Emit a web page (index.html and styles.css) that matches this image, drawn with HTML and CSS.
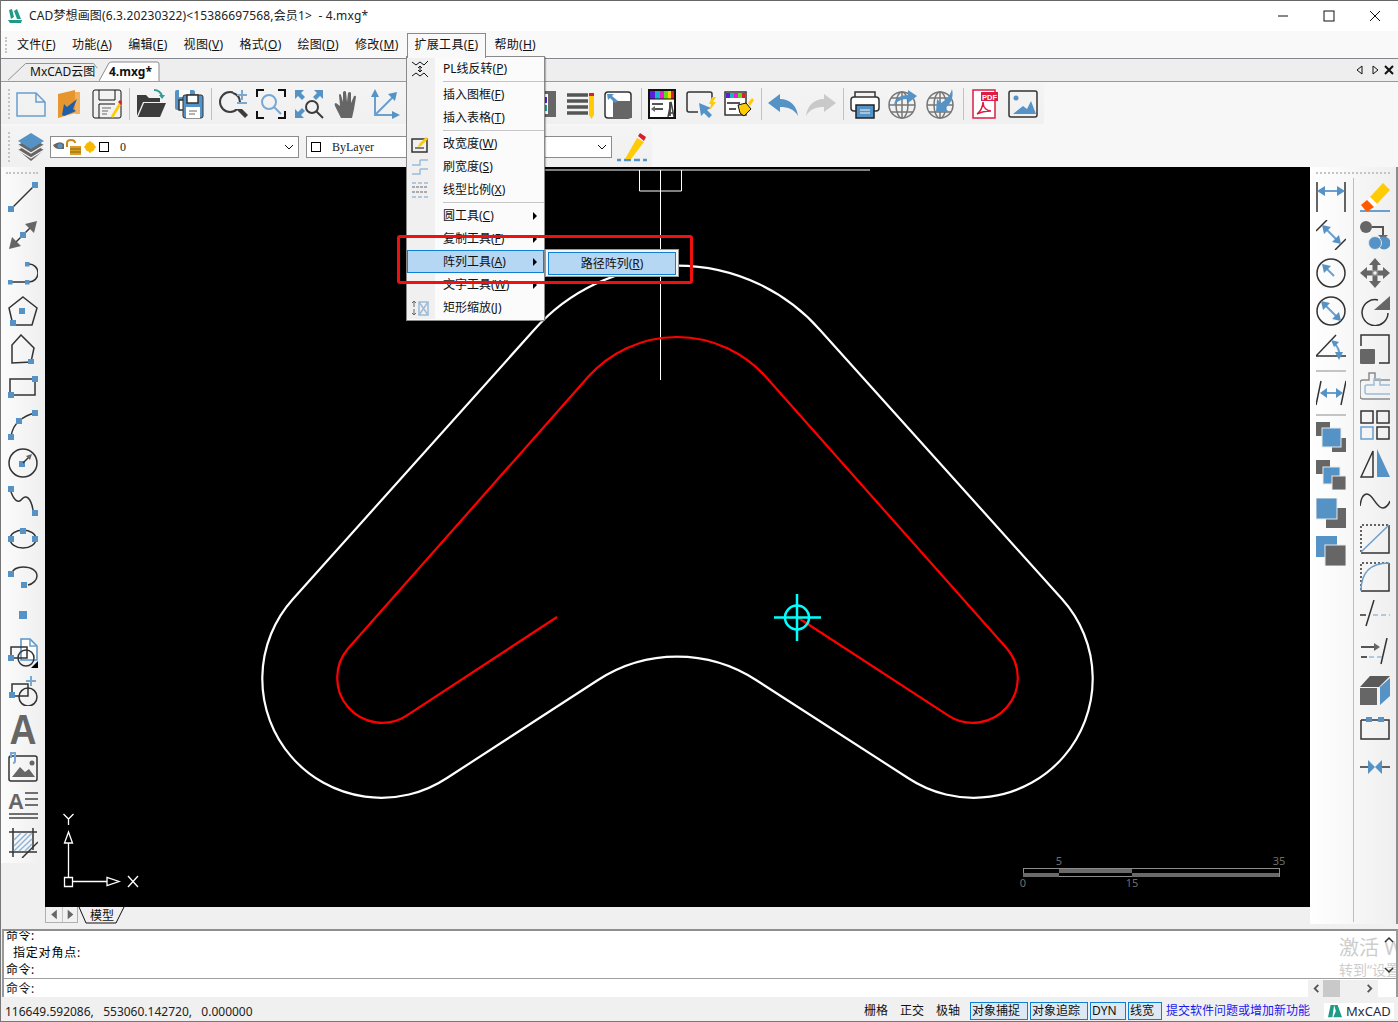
FILE: index.html
```html
<!DOCTYPE html>
<html lang="zh-CN">
<head>
<meta charset="utf-8">
<title>CAD梦想画图</title>
<link rel="stylesheet" href="styles.css">
</head>
<body>
<div class="app">

<header class="titlebar">
  <svg class="app-icon" viewBox="0 0 16 16"><path class="logo" d="M2 2 5 1 7 9 4 11ZM7 3 10 1 14 11 10 11ZM1 12 15 12 14 15 3 15Z"/></svg>
  <span class="title-text">CAD梦想画图(6.3.20230322)&lt;15386697568,会员1&gt;  - 4.mxg*</span>
  <div class="win-controls">
    <svg viewBox="0 0 12 12"><path class="k1" d="M1 6H11"/></svg>
    <svg viewBox="0 0 12 12"><rect class="k1" x="1" y="1" width="10" height="10"/></svg>
    <svg viewBox="0 0 12 12"><path class="k1" d="M1 1 11 11M11 1 1 11"/></svg>
  </div>
</header>

<nav class="menubar">
  <span class="grip-v"></span>
  <span class="menu-top">文件(<u>F</u>)</span>
  <span class="menu-top">功能(<u>A</u>)</span>
  <span class="menu-top">编辑(<u>E</u>)</span>
  <span class="menu-top">视图(<u>V</u>)</span>
  <span class="menu-top">格式(<u>O</u>)</span>
  <span class="menu-top">绘图(<u>D</u>)</span>
  <span class="menu-top">修改(<u>M</u>)</span>
  <span class="menu-top menu-open">扩展工具(<u>E</u>)</span>
  <span class="menu-top">帮助(<u>H</u>)</span>
</nav>

<div class="tabrow">
  <div class="tab tab-back">
    <svg class="tab-shape" viewBox="0 0 100 22"><path class="tab-line" d="M0 22 19 4H92L96 9"/></svg>
    <span class="tab-label">MxCAD云图</span>
  </div>
  <div class="tab tab-active">
    <svg class="tab-shape" viewBox="0 0 62 22"><path class="tab-fill" d="M0 22 10 4Q11 3 13 3H58Q60 3 60 5V22"/></svg>
    <span class="tab-label">4.mxg*</span>
  </div>
  <div class="tab-nav">
    <svg viewBox="0 0 10 10"><path class="k1" d="M7 1 2 5 7 9Z"/></svg>
    <svg viewBox="0 0 10 10"><path class="k1" d="M3 1 8 5 3 9Z"/></svg>
    <svg class="tab-close" viewBox="0 0 10 10"><path class="k2" d="M1 1 9 9M9 1 1 9"/></svg>
  </div>
</div>

<section class="toolbars">
  <div class="toolrow">
    <div class="toolbar toolbar-main">
      <span class="grip-v"></span>
      <svg class="ic" viewBox="0 0 30 30"><path class="bl" d="M1 4H20L29 13V27H1ZM20 4V13H29"/></svg>
      <svg class="ic" viewBox="0 0 30 30"><path class="or" d="M4 5 21 1V24L4 29Z"/><path class="or2" d="M21 3H26V25H21Z"/><path class="bd-f" d="M23 10 19 20 22 22 10 27 8 26 10 15 13 18Z"/></svg>
      <svg class="ic" viewBox="0 0 30 30"><rect class="k1" x="1" y="1" width="28" height="28" rx="2"/><path class="k1" d="M7 1V11H23V1M7 29V15H23"/><path class="gl" d="M10 19H19M10 22H16M10 25H15"/><path class="yf" d="M19 27 27 14 29 16 21 29Z"/><path class="rf" d="M26 13 28 11 30 13 29 16Z"/></svg>
      <span class="tsep"></span>
      <svg class="ic" viewBox="0 0 30 30"><path class="df" d="M1 6H10L13 9H24V13H7L1 27Z"/><path class="df" d="M8 14H30L24 28H2Z"/><path class="teal" d="M18 1Q24 1 26 7"/><path class="tf" d="M23 6H29L26 10Z"/></svg>
      <svg class="ic" viewBox="0 0 30 30"><rect class="bf" x="1" y="1" width="20" height="20" rx="2"/><rect class="wf" x="5" y="1" width="11" height="7"/><rect class="wk" x="5" y="11" width="12" height="10"/><rect class="bk" x="9" y="6" width="20" height="23" rx="2"/><rect class="wk" x="13" y="6" width="11" height="8"/><rect class="wf" x="12" y="18" width="14" height="11"/><path class="gl" d="M15 22H23M15 25H21"/></svg>
      <span class="tsep"></span>
      <svg class="ic" viewBox="0 0 30 30"><circle class="dk" cx="12" cy="13" r="10"/><path class="dkf" d="M19 21 22 18 30 26 27 29Z"/><path class="wt" d="M15 0H28V20H15Z"/><path class="dk" d="M15 4A10 10 0 0 1 22 13"/><path class="blt" d="M19 6H29M24 1V11M19 14H29"/></svg>
      <svg class="ic" viewBox="0 0 30 30"><path class="k2" d="M1 8V1H8M22 1H29V8M1 22V29H8M22 29H29V22"/><circle class="blt" cx="13" cy="13" r="7"/><path class="blt" d="M18 18 25 25"/></svg>
      <svg class="ic" viewBox="0 0 30 30"><path class="bf" d="M1 1H10L7 4 11 8 8 11 4 7 1 10ZM29 1H20L23 4 19 8 22 11 26 7 29 10ZM1 29H10L7 26 11 22 8 19 4 23 1 20Z"/><circle class="dk" cx="18" cy="18" r="6"/><path class="dk" d="M22 22 29 29"/></svg>
      <svg class="ic" viewBox="0 0 30 30"><path class="gf" d="M9 29 3 17Q2 14 4 14L8 17 7 6Q8 4 9 6L11 13 11 3Q13 1 14 3L15 13 16 4Q18 2 19 4L19 14 22 7Q24 6 24 8L22 20 20 29Z"/></svg>
      <svg class="ic" viewBox="0 0 30 30"><path class="bls" d="M5 4V26H28M5 26 25 6"/><path class="bf" d="M5 0 9 8H1ZM30 26 22 30V22ZM27 3 25 12 18 5Z"/></svg>
      <div class="hidden-span"></div>
      <svg class="ic" viewBox="0 0 30 30"><rect class="gf" x="2" y="2" width="26" height="26"/><rect class="wf" x="6" y="5" width="14" height="20"/><rect class="purple" x="7" y="8" width="12" height="6"/><rect class="tealf" x="7" y="16" width="12" height="6"/></svg>
      <svg class="ic" viewBox="0 0 30 30"><path class="gk3" d="M1 6H22M1 12H22M1 18H22M1 24H22"/><rect class="yf" x="23" y="5" width="5" height="21"/><rect class="rf" x="23" y="4" width="5" height="3"/><path class="yf" d="M23 26H28L25.500 30Z"/></svg>
      <svg class="ic" viewBox="0 0 30 30"><rect class="wk" x="1" y="3" width="26" height="26" rx="3"/><path class="gf" d="M9 12H28V29H9Z"/><path class="bf" d="M3 5H10L8 7 14 12 11 14 6 9 4 11Z"/></svg>
      <span class="tsep"></span>
      <svg class="ic" viewBox="0 0 30 30"><rect class="bkk" x="1" y="1" width="26" height="28"/><rect class="purple" x="2" y="2" width="5" height="8"/><rect class="cyan" x="7" y="2" width="5" height="8"/><rect class="mag" x="12" y="2" width="4" height="8"/><rect class="lime" x="16" y="2" width="4" height="8"/><rect class="yel" x="20" y="2" width="3" height="8"/><rect class="red" x="23" y="2" width="3" height="8"/><path class="gk2" d="M4 15H15M6 20H15M22 13V27"/><path class="gk15" d="M20 28 23 13 26 28M21 24H25"/><path class="gf" d="M3 20 7 17V23Z"/><path class="k1" d="M1 10H27"/></svg>
      <svg class="ic" viewBox="0 0 30 30"><path class="k15" d="M12 23H3Q1 23 1 21V5Q1 3 3 3H24Q26 3 26 5V11"/><path class="bf" d="M13 14 25 19 21 21 26 26 23 29 18 24 15 27Z"/><path class="yf" d="M26 8 30 8 27 13 30 13 24 21 25 15 23 15Z"/></svg>
      <svg class="ic" viewBox="0 0 30 30"><rect class="wk" x="1" y="3" width="21" height="23"/><rect class="purple" x="2" y="4" width="4" height="5"/><rect class="cyan" x="6" y="4" width="4" height="5"/><rect class="mag" x="10" y="4" width="4" height="5"/><rect class="lime" x="14" y="4" width="4" height="5"/><rect class="red" x="18" y="4" width="3" height="5"/><path class="gk2" d="M3 14H16M5 20H12"/><path class="yf" d="M14 16 22 14 27 20 20 27 16 24 Z"/><path class="k1" d="M14 16 22 14 27 20 20 27 16 24Z"/><path class="yf" d="M24 14 28 9 30 11 26 17Z"/></svg>
      <span class="tsep"></span>
      <svg class="ic" viewBox="0 0 30 30"><path class="bf" d="M0 14 12 5V10C22 10 29 17 30 27 26 20 20 18 12 18V23Z"/></svg>
      <svg class="ic" viewBox="0 0 30 30"><path class="lg" d="M30 14 18 5V10C8 10 1 17 0 27 4 20 10 18 18 18V23Z"/></svg>
      <span class="tsep"></span>
      <svg class="ic" viewBox="0 0 30 30"><path class="k15" d="M5 8V3H25V8"/><rect class="wk" x="1" y="8" width="28" height="14" rx="3"/><rect class="bkb" x="6" y="16" width="18" height="13"/><path class="wln" d="M10 21H20M10 24H20"/></svg>
      <svg class="ic" viewBox="0 0 30 30"><circle class="gk15n" cx="14" cy="16" r="13"/><ellipse class="gk15n" cx="14" cy="16" rx="6" ry="13"/><path class="gk15n" d="M1 16H27M3 9H25M3 23H25M14 3V29"/><path class="bf" d="M6 16C7 9 13 6 20 6V1L29 7 20 14V10C15 10 10 11 6 16Z"/></svg>
      <svg class="ic" viewBox="0 0 30 30"><circle class="gk15n" cx="14" cy="16" r="13"/><ellipse class="gk15n" cx="14" cy="16" rx="6" ry="13"/><path class="gk15n" d="M1 16H27M3 9H25M3 23H25M14 3V29"/><path class="bf" d="M26 0C28 8 25 15 19 19L23 23 10 23 11 10 15 14C20 11 24 7 26 0Z"/></svg>
      <span class="tsep"></span>
      <svg class="ic" viewBox="0 0 30 30"><rect class="pdf-page" x="3" y="1" width="22" height="28"/><rect class="pdf-tag" x="11" y="3" width="17" height="9"/><text class="pdf-text" x="19.500" y="10.500">PDF</text><path class="pdf-sym" d="M7 25C10 23 13 18 13 13 13 19 17 22 21 22 16 22 11 23 7 25Z"/></svg>
      <svg class="ic" viewBox="0 0 30 30"><rect class="k15" x="1" y="2" width="28" height="26" rx="2"/><circle class="bf" cx="8" cy="9" r="2.500"/><path class="bf" d="M5 25 15 17 19 20 23 12 28 25Z"/></svg>
    </div>
  </div>
  <div class="toolrow">
    <div class="toolbar toolbar-second">
      <span class="grip-v"></span>
      <svg class="ic" viewBox="0 0 30 30"><path class="gf" d="M2 18 15 11 28 18 15 29Z"/><path class="wln" d="M2 18 15 26 28 18"/><path class="gf" d="M2 13 15 6 28 13 15 24Z"/><path class="wln" d="M2 13 15 21 28 13"/><path class="bf" d="M2 9 15 1 28 9 15 17Z"/></svg>
      <div class="combo combo-layer">
        <svg class="lyr-ic" viewBox="0 0 46 16"><path class="gf" d="M0 6Q7 1 11 5V10H6Q2 10 0 6Z"/><circle class="bf" cx="7" cy="7" r="2.500"/><path class="lock-sh" d="M14 8V4Q14 1 18 1 22 1 22 4"/><rect class="gold" x="17" y="7" width="11" height="9"/><path class="gold-ln" d="M17 10H28M17 13H28"/><path class="sun-r" d="M37 2V14M31 8H43"/><circle class="sun" cx="37" cy="8" r="5"/></svg>
        <span class="swatch"></span>
        <span class="combo-text">0</span>
        <svg class="chev" viewBox="0 0 10 6"><path class="k1" d="M1 1 5 5 9 1"/></svg>
      </div>
      <div class="combo combo-line">
        <span class="swatch"></span>
        <span class="combo-text">ByLayer</span>
        <svg class="chev" viewBox="0 0 10 6"><path class="k1" d="M1 1 5 5 9 1"/></svg>
      </div>
      <svg class="ic" viewBox="0 0 30 30"><path class="bd" d="M0 28H4M7 28H14M17 28H23M26 28H30"/><path class="yf" d="M8 27 20 6 27 10 14 27Z"/><path class="rf" d="M21 4 23 1 29 5 27 9Z"/></svg>
    </div>
  </div>
</section>

<main class="workspace">
  <aside class="side-left">
    <span class="grip-h"></span>
    <div class="tool-col">
      <svg class="ic" viewBox="0 0 30 30"><path class="k15" d="M3 27 27 3"/><rect class="bf" x="24" y="0" width="6" height="6"/><rect class="bf" x="0" y="24" width="6" height="6"/></svg>
      <svg class="ic" viewBox="0 0 30 30"><path class="k15" d="M7 23 23 7"/><path class="gf" d="M1 29 4 17 13 26ZM29 1 26 13 17 4Z"/><rect class="bf" x="12" y="12" width="6" height="6"/></svg>
      <svg class="ic" viewBox="0 0 30 30"><path class="k15" d="M2 24H19M21 6A9 9 0 0 1 21 24"/><rect class="bf" x="0" y="22" width="4.500" height="4.500"/><rect class="bf" x="17" y="22" width="4.500" height="4.500"/><rect class="bf" x="17" y="4" width="4.500" height="4.500"/></svg>
      <svg class="ic" viewBox="0 0 30 30"><path class="k15" d="M15 1 29 12 24 29H5L1 12Z"/><rect class="bf" x="11" y="12" width="6" height="6"/><rect class="bf" x="2" y="24" width="6" height="6"/></svg>
      <svg class="ic" viewBox="0 0 30 30"><path class="k15" d="M13 1 26 14 23 28 4 29V11Z"/><rect class="bf" x="20" y="25" width="6" height="6"/></svg>
      <svg class="ic" viewBox="0 0 30 30"><rect class="k15" x="2" y="7" width="25" height="16"/><rect class="bf" x="24" y="4" width="6" height="6"/><rect class="bf" x="0" y="20" width="6" height="6"/></svg>
      <svg class="ic" viewBox="0 0 30 30"><path class="k15" d="M3 26Q5 16 11 11 18 5 27 3"/><rect class="bf" x="0" y="24" width="6" height="6"/><rect class="bf" x="8" y="8" width="6" height="6"/><rect class="bf" x="24" y="0" width="6" height="6"/></svg>
      <svg class="ic" viewBox="0 0 30 30"><circle class="k15" cx="15" cy="15" r="14"/><rect class="bf" x="11" y="13" width="6" height="6"/><path class="k15" d="M15 15 22 8"/><path class="gf" d="M24 6 22 12 18 8Z"/></svg>
      <svg class="ic" viewBox="0 0 30 30"><path class="k15" d="M3 6C6 14 10 18 14 13 18 8 23 12 25 24"/><rect class="bf" x="0" y="0" width="6" height="6"/><rect class="bf" x="24" y="24" width="6" height="6"/></svg>
      <svg class="ic" viewBox="0 0 30 30"><ellipse class="k15" cx="15" cy="15" rx="13" ry="9"/><rect class="bf" x="12" y="4" width="6" height="6"/><rect class="bf" x="0" y="12" width="6" height="6"/><rect class="bf" x="24" y="12" width="6" height="6"/></svg>
      <svg class="ic" viewBox="0 0 30 30"><path class="k15" d="M3 12C5 7 10 5 15 5 24 5 29 9 29 14 29 18 25 22 20 23"/><rect class="bf" x="0" y="9" width="6" height="6"/><rect class="bf" x="13" y="20" width="6" height="6"/></svg>
      <svg class="ic" viewBox="0 0 30 30"><rect class="bf" x="11" y="11" width="8" height="8"/></svg>
      <svg class="ic" viewBox="0 0 30 30"><path class="bkw" d="M13 1H22L29 8V22H13Z"/><path class="bl" d="M22 1V8H29"/><rect class="k15" x="3" y="9" width="16" height="11"/><circle class="k15" cx="18" cy="20" r="8"/><rect class="bf" x="0" y="17" width="6" height="6"/><path class="blk" d="M30 23V30H23Z"/></svg>
      <svg class="ic" viewBox="0 0 30 30"><rect class="k15" x="4" y="8" width="16" height="12"/><circle class="k15" cx="20" cy="21" r="9"/><rect class="bf" x="1" y="16" width="6" height="6"/><path class="blt" d="M18 5H28M23 0V10"/></svg>
      <svg class="ic ic-text" viewBox="0 0 30 30"><text class="big-a" x="15" y="30" textLength="27" lengthAdjust="spacingAndGlyphs">A</text></svg>
      <svg class="ic" viewBox="0 0 30 30"><rect class="k15" x="1" y="4" width="28" height="25" rx="2"/><circle class="gf" cx="24" cy="11" r="2.500"/><path class="gf" d="M4 25 12 15 17 20 21 17 27 25Z"/><path class="blt" d="M3 6V1H7V9Q7 11 5 11"/></svg>
      <svg class="ic ic-text" viewBox="0 0 30 30"><text class="mid-a" x="8" y="19">A</text><path class="gk15" d="M17 3H30M17 9H30M17 15H30M1 24H30M1 28H30"/></svg>
      <svg class="ic" viewBox="0 0 30 30"><path class="k15" d="M1 4H29M1 24H29M5 0V29M25 0V22"/><path class="hatch" d="M6 12 13 5M6 18 19 5M6 23 24 5M11 23 24 11M17 23 24 16"/><path class="k15" d="M14 30 30 14"/></svg>
    </div>
  </aside>

  <div class="center">
    <div class="canvas">
      <svg class="drawing" viewBox="45 167 1265 740">
        <path class="wline" d="M540 170H870M639.500 170V191H681.500V170M660.500 170V380"/>
        <path class="outer" d="M293 599 534 330A191 191 0 0 1 820 330L1062 599A119 119 0 0 1 908 778L756 680A145 145 0 0 0 598 680L447 778A119 119 0 0 1 293 599Z"/>
        <path class="inner" d="M557 617 406.600 715.700A45 45 0 0 1 348.300 648.300L588 377A119 119 0 0 1 766 377L1006.700 648.300A45 45 0 0 1 948.400 715.700L797 617"/>
        <g class="cursor"><circle cx="797" cy="617.500" r="12"/><path d="M774 617.500H821M797 594V641"/></g>
        <g class="ucs">
          <path d="M68.500 878V843M73 881.500H107M64.500 877.500H72.500V886.500H64.500ZM68.500 832 64.500 843H72.500ZM107 877.500V885.500L119 881.500ZM63.500 814 68.500 819 73.500 814M68.500 819V825M128 876 138 887M138 876 128 887"/>
        </g>
        <g class="scalebar">
          <rect class="sb-o" x="1023.500" y="868.500" width="256" height="8"/>
          <path class="sb-f" d="M1023 873H1059V877H1023ZM1059 869H1132V873H1059ZM1132 873H1279V877H1132Z"/>
          <text x="1059" y="865">5</text><text x="1279" y="865">35</text><text x="1023" y="887">0</text><text x="1132" y="887">15</text>
        </g>
      </svg>
    </div>
    <div class="sheetbar">
      <div class="sheet-nav">
        <svg viewBox="0 0 16 16"><path class="gf" d="M11 3 5 8 11 13Z"/></svg>
        <svg viewBox="0 0 16 16"><path class="gf" d="M5 3 11 8 5 13Z"/></svg>
      </div>
      <div class="sheet-tab">
        <svg class="sheet-shape" viewBox="0 0 48 17"><path class="k1 wf-soft" d="M1 0 8 16H38L46 0"/></svg>
        <span class="sheet-label">模型</span>
      </div>
    </div>
  </div>

  <aside class="side-right">
    <span class="grip-h"></span>
    <div class="right-cols">
      <div class="tool-col">
        <svg class="ic" viewBox="0 0 30 30"><path class="k15" d="M1 0V30M29 0V30"/><path class="bls" d="M5 9H25"/><path class="bf" d="M1 9 9 4V14ZM29 9 21 4V14Z"/></svg>
        <svg class="ic" viewBox="0 0 30 30"><path class="k15" d="M0 11 11 0M19 30 30 19"/><path class="bls" d="M9 8 22 21"/><path class="bf" d="M6 5 15 7 8 14ZM25 24 16 22 23 15Z"/></svg>
        <svg class="ic" viewBox="0 0 30 30"><circle class="k15" cx="15" cy="15" r="14"/><path class="bls" d="M10 10 18 18"/><path class="bf" d="M6 6 15 8 8 15Z"/></svg>
        <svg class="ic" viewBox="0 0 30 30"><circle class="k15" cx="15" cy="15" r="14"/><path class="bls" d="M10 10 20 20"/><path class="bf" d="M5 5 14 7 7 14ZM25 25 16 23 23 16Z"/></svg>
        <svg class="ic" viewBox="0 0 30 30"><path class="k15" d="M0 22H30M0 22 20 1"/><path class="bls" d="M18 9Q24 15 23 21"/><path class="bf" d="M15 6 23 8 18 13ZM23 26 19 18 27 18Z"/></svg>
        <span class="csep"></span>
        <svg class="ic" viewBox="0 0 30 30"><path class="k15" d="M0 27 5 3M25 27 30 3"/><path class="bls" d="M7 15H24"/><path class="bf" d="M4 15 11 10V20ZM27 15 20 10V20Z"/></svg>
        <span class="csep"></span>
        <svg class="ic" viewBox="0 0 30 30"><rect class="gf" x="0" y="0" width="14" height="14"/><rect class="gf" x="16" y="16" width="14" height="14"/><rect class="bf bw" x="6" y="6" width="19" height="19"/></svg>
        <svg class="ic" viewBox="0 0 30 30"><rect class="gf" x="0" y="0" width="14" height="14"/><rect class="bf bw" x="7" y="7" width="17" height="17"/><rect class="gf bw" x="16" y="16" width="14" height="14"/></svg>
        <svg class="ic" viewBox="0 0 30 30"><rect class="gf" x="10" y="10" width="20" height="20"/><rect class="bf bw" x="0" y="0" width="21" height="21"/></svg>
        <svg class="ic" viewBox="0 0 30 30"><rect class="bf" x="0" y="0" width="21" height="21"/><rect class="gf bw" x="9" y="9" width="21" height="21"/></svg>
      </div>
      <div class="tool-col col-right">
        <svg class="ic" viewBox="0 0 30 30"><path class="bls" d="M0 29H30"/><path class="yf" d="M10 15 23 1 30 8 17 22Z"/><path class="wf" d="M7 18 10 15 17 22 14 25Z"/><path class="orr" d="M1 23 7 18 14 25 8 29 6 29Z"/></svg>
        <svg class="ic" viewBox="0 0 30 30"><circle class="gf" cx="6" cy="7" r="6"/><path class="gk2" d="M12 7H23V16"/><path class="gf" d="M18 15H28L23 20Z"/><circle class="bf" cx="24" cy="23" r="6.500"/><circle class="bf bw" cx="15" cy="23" r="6.500"/></svg>
        <svg class="ic" viewBox="0 0 30 30"><path class="gf" d="M15 0 21 7H17.500V12.500H12.500V7H9ZM15 30 21 23H17.500V17.500H12.500V23H9ZM0 15 7 9V12.500H12.500V17.500H7V21ZM30 15 23 9V12.500H17.500V17.500H23V21Z"/><circle class="gk1" cx="15" cy="15" r="2.500"/></svg>
        <svg class="ic" viewBox="0 0 30 30"><path class="k15" d="M18 4A13 13 0 1 0 28 17"/><path class="gf" d="M30 0V14H14Z"/></svg>
        <svg class="ic" viewBox="0 0 30 30"><path class="k15" d="M1 12V1H29V29H19"/><rect class="gf" x="0" y="15" width="15" height="15" rx="1"/></svg>
        <svg class="ic" viewBox="0 0 30 30"><path class="gk1" d="M30 8H15V1H9V8H3Q0 8 0 11V24Q0 27 3 27H30"/><path class="blt1" d="M30 13H20V7H14V13H7Q5 13 5 15V20Q5 22 7 22H30"/></svg>
        <svg class="ic" viewBox="0 0 30 30"><rect class="k15" x="1" y="1" width="12" height="12"/><rect class="k15" x="17" y="1" width="12" height="12"/><rect class="bl" x="1" y="17" width="12" height="12"/><rect class="k15" x="17" y="17" width="12" height="12"/></svg>
        <svg class="ic" viewBox="0 0 30 30"><path class="k15" d="M1 29 13 3V29Z"/><path class="bf" d="M17 1 30 29H17Z"/></svg>
        <svg class="ic" viewBox="0 0 30 30"><path class="k15" d="M0 20C1 12 3 8 7 8 13 8 16 22 23 22 26 22 29 18 30 15"/></svg>
        <svg class="ic" viewBox="0 0 30 30"><path class="dot" d="M1 28V1H29"/><path class="k15" d="M29 1V29H1"/><path class="bls1" d="M1 28 29 1"/></svg>
        <svg class="ic" viewBox="0 0 30 30"><path class="dot" d="M1 28V1H29"/><path class="k15" d="M29 1V29H1"/><path class="bls1" d="M1 29Q1 1 29 1"/></svg>
        <svg class="ic" viewBox="0 0 30 30"><path class="k15" d="M0 15H6M14 0 6 26"/><path class="blt1 dash" d="M13 15H30"/></svg>
        <svg class="ic" viewBox="0 0 30 30"><path class="k15" d="M27 0 21 26"/><path class="gk2" d="M1 9H16"/><path class="gf" d="M14 5 20 9 14 13Z"/><path class="gk2" d="M1 19H7"/><path class="blt1 dash" d="M9 19H23"/></svg>
        <svg class="ic" viewBox="0 0 30 30"><path class="dgr" d="M10 0H30L19 11H0Z"/><rect class="gf" x="0" y="12" width="17" height="17"/><path class="bf" d="M20 11 30 2V20L20 29Z"/></svg>
        <svg class="ic" viewBox="0 0 30 30"><path class="k15" d="M1 6V25H29V6H23M7 6H1M18 6H12"/><rect class="bf" x="6" y="3" width="6" height="5"/><rect class="bf" x="18" y="3" width="6" height="5"/></svg>
        <svg class="ic" viewBox="0 0 30 30"><path class="k15" d="M0 15H8M22 15H30"/><path class="bf" d="M8 8 15 15 8 22ZM22 8 15 15 22 22Z"/></svg>
      </div>
    </div>
  </aside>
</main>

<section class="command">
  <div class="cmd-output">
    <div class="cmd-line">命令:</div>
    <div class="cmd-line cmd-indent">指定对角点:</div>
    <div class="cmd-line">命令:</div>
  </div>
  <div class="cmd-input">
    <span class="cmd-prompt">命令:</span>
    <div class="hscroll">
      <svg viewBox="0 0 10 10"><path class="gk2" d="M7 1 3 5 7 9"/></svg>
      <span class="thumb"></span>
      <svg viewBox="0 0 10 10"><path class="gk2" d="M3 1 7 5 3 9"/></svg>
    </div>
  </div>
  <div class="watermark">
    <div class="wm-big">激活 W</div>
    <div class="wm-small">转到“设置</div>
  </div>
  <svg class="vs-up" viewBox="0 0 10 8"><path class="k15" d="M1 6 5 2 9 6"/></svg>
  <svg class="vs-down" viewBox="0 0 10 8"><path class="k15" d="M1 2 5 6 9 2"/></svg>
</section>

<footer class="statusbar">
  <span class="coords">116649.592086,&nbsp;&nbsp;&nbsp;553060.142720,&nbsp;&nbsp;&nbsp;0.000000</span>
  <div class="panes">
    <span class="pane p-grid">栅格</span>
    <span class="pane p-ortho">正交</span>
    <span class="pane p-polar">极轴</span>
    <span class="pane on p-snap">对象捕捉</span>
    <span class="pane on p-track">对象追踪</span>
    <span class="pane on p-dyn">DYN</span>
    <span class="pane on p-lw">线宽</span>
    <span class="pane link">提交软件问题或增加新功能</span>
    <span class="brand"><svg viewBox="0 0 18 16"><path class="logo" d="M1 15 4 1H8L6 15ZM8 1H12L17 15H12ZM7 15 10 8 12 15Z"/></svg>MxCAD</span>
  </div>
</footer>

<div class="dropdown">
  <div class="mi"><span class="mi-ico"><svg viewBox="0 0 18 18"><path class="k1" d="M1 2 5 5 9 2 13 5 17 1M1 16 5 13 9 16 13 13 17 17M9 6V12M7 8 9 6 11 8M7 10 9 12 11 10"/></svg></span><span class="mi-label">PL线反转(<u>P</u>)</span></div>
  <div class="ms"></div>
  <div class="mi"><span class="mi-ico"></span><span class="mi-label">插入图框(<u>F</u>)</span></div>
  <div class="mi"><span class="mi-ico"></span><span class="mi-label">插入表格(<u>T</u>)</span></div>
  <div class="ms"></div>
  <div class="mi"><span class="mi-ico"><svg viewBox="0 0 18 18"><rect class="k15" x="1" y="4" width="15" height="13"/><path class="k1" d="M4 13H13"/><path class="yf" d="M8 9 15 2 17 4 10 11 7 12Z"/></svg></span><span class="mi-label">改宽度(<u>W</u>)</span></div>
  <div class="mi"><span class="mi-ico"><svg viewBox="0 0 18 18"><path class="blt1" d="M9 2H17M9 2V7H1M9 11H17M9 11V16H1"/></svg></span><span class="mi-label">刷宽度(<u>S</u>)</span></div>
  <div class="mi"><span class="mi-ico"><svg viewBox="0 0 18 18"><path class="blt1 dash3" d="M1 2H17M1 16H17"/><path class="gl dash2" d="M1 6H17M1 11H17"/></svg></span><span class="mi-label">线型比例(<u>X</u>)</span></div>
  <div class="ms"></div>
  <div class="mi mi-sub"><span class="mi-ico"></span><span class="mi-label">圆工具(<u>C</u>)</span></div>
  <div class="mi mi-sub"><span class="mi-ico"></span><span class="mi-label">复制工具(<u>F</u>)</span></div>
  <div class="mi mi-sub mi-hot"><span class="mi-ico"></span><span class="mi-label">阵列工具(<u>A</u>)</span></div>
  <div class="mi mi-sub"><span class="mi-ico"></span><span class="mi-label">文字工具(<u>W</u>)</span></div>
  <div class="mi"><span class="mi-ico"><svg viewBox="0 0 18 18"><rect class="blt1" x="8" y="3" width="9" height="13"/><path class="blt1" d="M8 3 17 16M17 3 8 16"/><path class="gl" d="M3 2V8M1 4 3 2 5 4M3 10V16M1 14 3 16 5 14"/></svg></span><span class="mi-label">矩形缩放(<u>J</u>)</span></div>
</div>

<div class="submenu">
  <div class="sub-item">路径阵列(<u>R</u>)</div>
</div>

<div class="callout"></div>

</div>
</body>
</html>
```
FILE: styles.css
```css
* { box-sizing: border-box; }
html, body { margin: 0; padding: 0; }
body { background: #f0f0f0; }
.app {
  position: relative;
  width: 1398px;
  height: 1022px;
  overflow: hidden;
  display: flex;
  flex-direction: column;
  background: #f0f0f0;
  color: #111;
  font: 12px/16px "Noto Sans", "Noto Sans CJK SC", sans-serif;
  border-bottom: 1px solid #777;
}
.app::after {
  content: "";
  position: absolute;
  left: 0;
  top: 0;
  bottom: 0;
  width: 1px;
  background: #777;
  z-index: 5;
}
svg { display: block; flex: none; }
u { text-underline-offset: 1px; }

/* title bar */
.titlebar {
  height: 31px;
  flex: none;
  display: flex;
  align-items: center;
  background: #fff;
  border-top: 1px solid #666;
  padding-left: 7px;
}
.app-icon { width: 16px; height: 16px; }
.title-text { margin-left: 6px; white-space: pre; color: #222; letter-spacing: 0.140px; }
.win-controls { margin-left: auto; display: flex; align-items: center; margin-right: 17px; }
.win-controls svg { width: 12px; height: 12px; margin-left: 34px; }

/* menu bar */
.menubar {
  height: 27px;
  flex: none;
  display: flex;
  align-items: center;
  background: #f9f9f9;
  padding-left: 5px;
}
.menubar .grip-v { height: 16px; margin-right: 2px; }
.menu-top { padding: 0 8px; white-space: nowrap; letter-spacing: 0.290px; }
.menu-open {
  align-self: flex-end;
  height: 25px;
  line-height: 22px;
  background: #f9f9f9;
  border: 1px solid #8a8a8a;
  border-bottom: 0;
  padding: 0 7px;
  position: relative;
  z-index: 3;
}
.grip-v { width: 2px; height: 30px; flex: none; border-left: 2px dotted #c4c4c4; }
.grip-h { display: block; height: 2px; margin: 0 6px; border-top: 2px dotted #c4c4c4; flex: none; }

/* document tabs */
.tabrow {
  height: 24px;
  flex: none;
  display: flex;
  background: #eeeeee;
  border-top: 1px solid #86868e;
  border-bottom: 1px solid #9a9a9a;
  padding-left: 8px;
  position: relative;
}
.tab { position: relative; height: 22px; display: flex; align-items: center; padding-top: 3px; }
.tab-back { width: 93px; padding-left: 22px; }
.tab-active { width: 62px; margin-left: -2px; padding-left: 10px; }
.tab-shape { position: absolute; left: 0; top: 0; height: 22px; width: 100%; }
.tab-line { fill: none; stroke: #8a8a8a; }
.tab-fill { fill: #fff; stroke: #8a8a8a; }
.tab-label { position: relative; white-space: nowrap; }
.tab-active .tab-label { font-weight: 700; }
.tab-nav { margin-left: auto; display: flex; align-items: center; margin-right: 4px; }
.tab-nav svg { width: 10px; height: 10px; margin-left: 5px; }
.tab-nav .tab-close { margin-left: 4px; }

/* toolbars */
.toolbars {
  height: 85px;
  flex: none;
  display: flex;
  flex-direction: column;
  gap: 2px;
  padding-top: 1px;
  background: #f7f7f7;
}
.toolrow { height: 41px; display: flex; }
.toolbar {
  display: flex;
  align-items: center;
  background: linear-gradient(#f4f4f4, #f0f0f0);
  border-radius: 0 3px 3px 0;
  height: 100%;
}
.toolbar-main { width: 1044px; padding-left: 8px; }
.toolbar-second { width: 652px; padding-left: 8px; }
.toolbar .grip-v { margin-right: 2px; }
.ic { width: 30px; height: 30px; }
.ic-text { overflow: visible; }
.toolbar > .ic { margin: 0 4px; }
.tsep { width: 1px; height: 32px; background: #c2c2c2; margin: 0 2px 0 3px; flex: none; }
.hidden-span { width: 120px; flex: none; }

/* combos */
.combo {
  display: flex;
  align-items: center;
  height: 22px;
  background: #fff;
  border: 1px solid #8c8c8c;
  flex: none;
}
.combo-layer { width: 249px; padding-left: 2px; }
.combo-line { width: 306px; margin-left: 7px; padding-left: 4px; margin-right: 1px; }
.lyr-ic { width: 46px; height: 16px; }
.swatch { width: 10px; height: 10px; border: 1px solid #000; background: #fff; flex: none; }
.combo-text { font: 12px/14px "Liberation Serif", serif; margin-left: 11px; color: #222; }
.chev { width: 10px; height: 6px; margin-left: auto; margin-right: 4px; }

/* workspace */
.workspace { height: 757px; flex: none; display: flex; }
.side-left {
  width: 44px;
  flex: none;
  padding-top: 5px;
  background: linear-gradient(90deg, #fcfcfc, #efefef);
  display: flex;
  flex-direction: column;
  height: 696px;
}
.tool-col { display: flex; flex-direction: column; align-items: center; padding-top: 4px; }
.tool-col > .ic { margin: 4px 0; }
.side-left .tool-col { padding-left: 2px; }
.csep { width: 30px; height: 2px; background: #c4c4c4; margin: 2px 0; flex: none; }
.center { width: 1266px; flex: none; display: flex; flex-direction: column; }
.canvas { height: 740px; background: #000; margin-left: 1px; }
.drawing { width: 1265px; height: 740px; }
.wline { fill: none; stroke: #fff; stroke-width: 1; }
.outer { fill: none; stroke: #fff; stroke-width: 2.200; }
.inner { fill: none; stroke: #f00; stroke-width: 2.200; }
.cursor circle, .cursor path { fill: none; stroke: #0ff; stroke-width: 2.500; }
.ucs path { fill: none; stroke: #fff; stroke-width: 1.300; }
.sb-o { fill: none; stroke: #8c8c8c; }
.sb-f { fill: #6a6a6a; }
.scalebar text { fill: #6e6e6e; font: 11px "Noto Sans", sans-serif; text-anchor: middle; }

/* sheet tabs */
.sheetbar { height: 17px; display: flex; background: #f0f0f0; padding-left: 1px; }
.sheet-nav {
  width: 33px;
  height: 16px;
  display: flex;
  background: #f1f1f1;
  border: 1px solid #b0b0b0;
  border-top: 0;
  flex: none;
}
.sheet-nav svg { width: 16px; height: 15px; }
.sheet-nav svg + svg { border-left: 1px solid #c4c4c4; }
.sheet-tab { position: relative; width: 48px; height: 17px; display: flex; justify-content: center; }
.sheet-shape { position: absolute; left: 0; top: 0; width: 48px; height: 17px; }
.wf-soft { fill: #f6f6f6; }
.sheet-label { position: relative; line-height: 17px; }

.side-right {
  width: 88px;
  flex: none;
  padding-top: 5px;
  background: linear-gradient(90deg, #fff, #efefef);
  border-right: 2px solid #8d8d8d;
  display: flex;
  flex-direction: column;
}
.right-cols { display: flex; flex: 1; padding-left: 2px; gap: 3px; }
.right-cols .tool-col { width: 38px; }
.right-cols .col-right { width: 43px; border-left: 1px solid #bdbdbd; margin-top: 4px; padding-top: 0; margin-bottom: 2px; }

/* command window */
.command {
  margin-top: 5px;
  margin-left: 2px;
  height: 68px;
  flex: none;
  position: relative;
  background: #fff;
  border-top: 2px solid #8f8f8f;
  border-left: 2px solid #9a9a9a;
  border-right: 2px solid #9a9a9a;
  display: flex;
  flex-direction: column;
  overflow: hidden;
}
.cmd-output { height: 47px; overflow: hidden; padding-left: 2px; }
.cmd-line { height: 17px; line-height: 17px; color: #000; white-space: nowrap; letter-spacing: 0.500px; }
.cmd-line:first-child { margin-top: -4px; }
.cmd-indent { padding-left: 7px; letter-spacing: 0.800px; }
.cmd-input { height: 19px; border-top: 1px solid #a0a0a0; display: flex; align-items: center; padding-left: 2px; }
.cmd-prompt { line-height: 17px; letter-spacing: 0.500px; }
.hscroll { margin-left: auto; margin-right: 18px; width: 70px; height: 17px; background: #f0f0f0; display: flex; align-items: center; justify-content: space-between; padding: 0 4px; }
.hscroll svg { width: 9px; height: 9px; }
.thumb { width: 17px; height: 17px; background: #c9c9c9; margin-left: 2px; margin-right: 25px; }
.watermark { position: absolute; left: 1335px; top: 3px; color: #cdcdcd; white-space: nowrap; }
.wm-big { font-size: 20px; line-height: 28px; }
.wm-small { font-size: 14px; line-height: 20px; margin-top: -2px; }
.vs-up, .vs-down { position: absolute; left: 1380px; width: 10px; height: 8px; }
.vs-up { top: 5px; }
.vs-down { top: 35px; }

/* status bar */
.statusbar { flex: 1; display: flex; align-items: center; padding-left: 5px; background: #f0f0f0; min-height: 0; padding-top: 4px; }
.coords { color: #222; white-space: pre; margin-top: 2px; }
.panes { margin-left: auto; display: flex; align-items: center; height: 18px; margin-right: 4px; }
.pane { height: 18px; line-height: 16px; text-align: center; white-space: nowrap; flex: none; border: 1px solid transparent; }
.p-grid { width: 36px; }
.p-ortho { width: 36px; }
.p-polar { width: 36px; margin-right: 4px; }
.p-snap, .p-track { width: 58px; margin-right: 2px; }
.p-dyn { width: 36px; margin-right: 2px; }
.p-lw { width: 34px; }
.on { background: #dce9f4; border-color: #0f7fd6; text-align: left; padding-left: 1px; }
.link { color: #1a1aee; padding-left: 3px; width: 158px; text-align: left; }
.brand { display: flex; align-items: center; gap: 3px; background: #fff; height: 16px; width: 70px; margin-left: 4px; padding-left: 3px; color: #1f2d3d; font-size: 13px; }
.brand svg { width: 16px; height: 14px; }

/* dropdown */
.dropdown {
  position: absolute;
  left: 406px;
  top: 56px;
  width: 139px;
  height: 265px;
  background: #fbfbfb;
  border: 1px solid #8a8a8a;
  box-shadow: 1px 1px 1px rgba(0,0,0,.25);
  z-index: 2;
}
.mi { height: 23px; display: flex; align-items: center; position: relative; }
.mi-ico { width: 28px; height: 100%; background: #f0f0f0; flex: none; display: flex; align-items: center; justify-content: center; padding-right: 3px; }
.mi-ico svg { width: 18px; height: 18px; }
.mi-label { margin-left: 8px; white-space: nowrap; }
.ms { height: 3px; position: relative; background: linear-gradient(90deg, #f0f0f0 28px, transparent 28px); }
.ms::after { content: ""; position: absolute; left: 36px; right: 0; top: 1px; height: 1px; background: #c6c6c6; }
.mi-sub::after {
  content: "";
  position: absolute;
  right: 7px;
  top: 8px;
  border-left: 4px solid #000;
  border-top: 4px solid transparent;
  border-bottom: 4px solid transparent;
}
.mi-hot { background: #b5d7f3; outline: 1px solid #0f7fd6; outline-offset: -1px; }
.mi-hot .mi-ico { background: transparent; }

.submenu {
  position: absolute;
  left: 545px;
  top: 249px;
  width: 134px;
  height: 28px;
  padding: 2px 2px 1px;
  background: #f4f4f4;
  border: 1px solid #9a9a9a;
  z-index: 2;
}
.sub-item { height: 100%; background: #b5d7f3; border: 1px solid #0f7fd6; text-align: center; line-height: 22px; }

.callout {
  position: absolute;
  left: 397px;
  top: 235px;
  width: 296px;
  height: 49px;
  border: 3px solid #f01010;
  border-radius: 3px;
  z-index: 4;
}

/* icon paint */
.logo { fill: #1f9a86; }
.k1 { fill: none; stroke: #111; stroke-width: 1; }
.k2 { fill: none; stroke: #111; stroke-width: 2; }
.k15 { fill: none; stroke: #333; stroke-width: 1.500; }
.bf { fill: #5592c6; }
.bd { fill: none; stroke: #5592c6; stroke-width: 2.500; }
.bd-f { fill: #1f5ea8; }
.bw { stroke: #e8e8e8; stroke-width: 1; }
.gf { fill: #666; }
.df { fill: #3c3c3c; }
.dgr { fill: #5a5a5a; }
.wf { fill: #fff; }
.wt { fill: #f2f2f2; }
.wk { fill: #fff; stroke: #333; stroke-width: 1.500; }
.bk { fill: #5592c6; stroke: #333; stroke-width: 1; }
.bkb { fill: #5592c6; stroke: #222; stroke-width: 1.500; }
.bkk { fill: #fff; stroke: #111; stroke-width: 2; }
.bkw { fill: #fff; stroke: #5592c6; stroke-width: 1.500; }
.blk { fill: #000; }
.bl { fill: none; stroke: #6a9fcf; stroke-width: 1.500; }
.bls { fill: none; stroke: #6a9fcf; stroke-width: 2; }
.bls1 { fill: none; stroke: #6a9fcf; stroke-width: 1.500; }
.blt { fill: none; stroke: #7aa8d2; stroke-width: 2; }
.blt1 { fill: none; stroke: #9cbcd9; stroke-width: 1.500; }
.dk { fill: none; stroke: #3c3c3c; stroke-width: 2; }
.dkf { fill: #3c3c3c; }
.gl { fill: none; stroke: #666; stroke-width: 1; }
.gk1 { fill: none; stroke: #8a8a8a; stroke-width: 1.500; }
.gk15 { fill: none; stroke: #444; stroke-width: 1.500; }
.gk15n { fill: none; stroke: #777; stroke-width: 1.500; }
.gk2 { fill: none; stroke: #555; stroke-width: 2; }
.gk3 { fill: none; stroke: #555; stroke-width: 3.500; }
.or { fill: #e6952f; }
.or2 { fill: #f0b060; }
.teal { fill: none; stroke: #2f9c95; stroke-width: 2; }
.tf { fill: #2f9c95; }
.tealf { fill: #1aa7a0; }
.purple { fill: #5a1fd6; }
.cyan { fill: #14b6c9; }
.mag { fill: #e81bd4; }
.lime { fill: #5ddb1d; }
.yel { fill: #ffd400; }
.red { fill: #d52222; }
.yf { fill: #ffcb05; }
.rf { fill: #d5202a; }
.orr { fill: #ff5a00; }
.lg { fill: #c9c9c9; }
.hatch { fill: none; stroke: #8fb6da; stroke-width: 1.500; }
.dot { fill: none; stroke: #333; stroke-width: 1.500; stroke-dasharray: 2 2; }
.dash { stroke-dasharray: 5 3; }
.dash2 { stroke-dasharray: 3 1; }
.dash3 { stroke-dasharray: 4 2; }
.wln { fill: none; stroke: #f4f4f4; stroke-width: 1.200; }
.lock-sh { fill: none; stroke: #c88a1c; stroke-width: 2; }
.gold { fill: #d8a028; }
.gold-ln { fill: none; stroke: #8a6410; stroke-width: 1; }
.sun { fill: #f7b800; }
.sun-r { fill: none; stroke: #f7c400; stroke-width: 1.500; }
.pdf-page { fill: #fff; stroke: #d91f45; stroke-width: 1.500; }
.pdf-tag { fill: #d91f45; }
.pdf-text { fill: #fff; font: 700 7.500px "Liberation Sans", sans-serif; text-anchor: middle; }
.pdf-sym { fill: none; stroke: #d91f45; stroke-width: 1.500; }
.big-a { fill: #666; font: 700 42px "Liberation Sans", sans-serif; text-anchor: middle; }
.mid-a { fill: #666; font: 700 22px "Liberation Sans", sans-serif; text-anchor: middle; }
```
